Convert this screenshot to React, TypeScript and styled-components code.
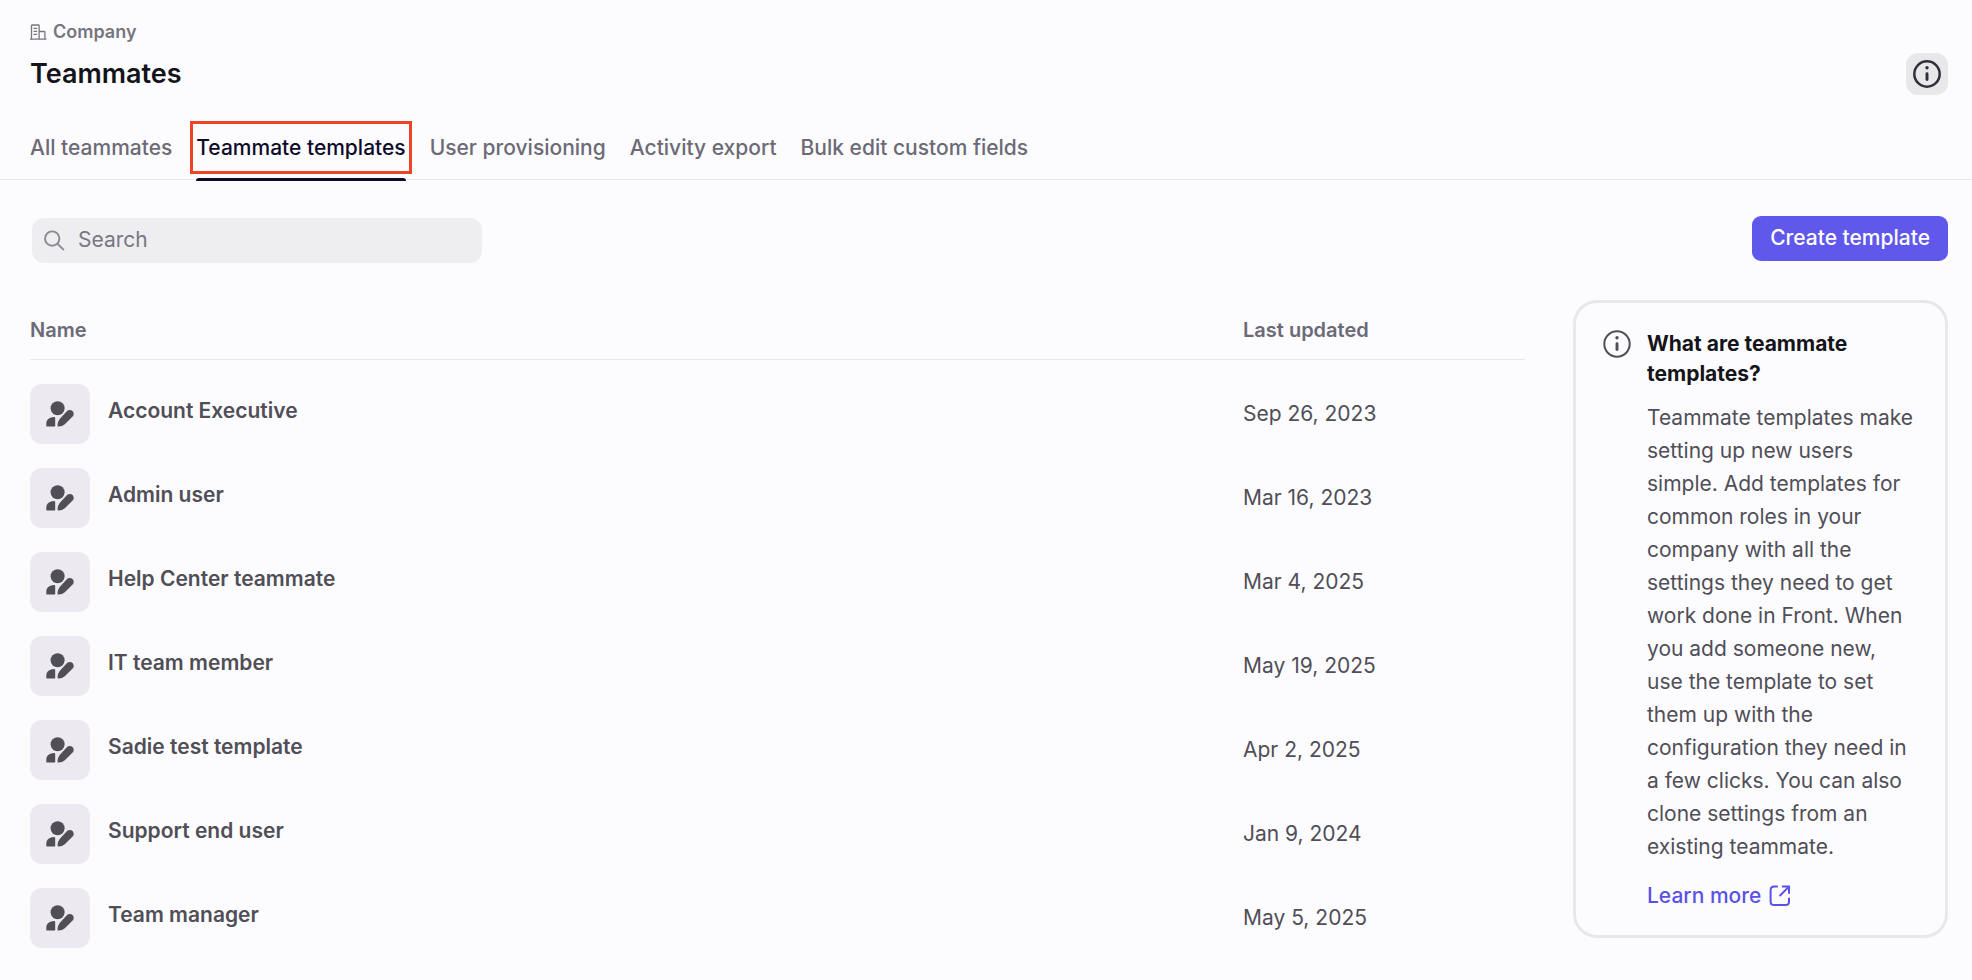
import React from "react";
import styled, { createGlobalStyle } from "styled-components";

const GlobalStyle = createGlobalStyle`
  *, *::before, *::after { box-sizing: border-box; }
  body {
    margin: 0;
    background: #fcfcfe;
    color: #504e57;
    font-family: Inter, "Liberation Sans", sans-serif;
    font-size: 21px;
    line-height: 30px;
  }
  button, input { font: inherit; }
`;

const Page = styled.div`
  padding-bottom: 24px;
`;

const Header = styled.header`
  display: flex;
  align-items: flex-end;
  justify-content: space-between;
  padding: 20px 24px 0 30px;
`;

const Breadcrumb = styled.a`
  display: flex;
  align-items: center;
  gap: 6px;
  color: #76757f;
  font-size: 18px;
  line-height: 24px;
  font-weight: 600;
  text-decoration: none;
`;

const Title = styled.h1`
  margin: 9px 0 0;
  color: #15141a;
  font-size: 27px;
  line-height: 42px;
  font-weight: 600;
`;

const InfoButton = styled.button`
  display: flex;
  align-items: center;
  justify-content: center;
  width: 42px;
  height: 42px;
  padding: 0;
  border: 0;
  border-radius: 12px;
  background: #e8e8ea;
  color: #322f3d;
  cursor: pointer;
`;

const Tabs = styled.div`
  display: flex;
  gap: 24px;
  padding: 24px 24px 0 30px;
  border-bottom: 1px solid #e8e8eb;
`;

const Tab = styled.button<{ $active?: boolean }>`
  position: relative;
  height: 60px;
  padding: 0 0 2px;
  border: 0;
  background: none;
  color: ${(p) => (p.$active ? "#0e0a2a" : "#6b6a75")};
  font-weight: 500;
  white-space: nowrap;
  cursor: pointer;

  &::after {
    content: ${(p) => (p.$active ? '""' : "none")};
    position: absolute;
    left: 0;
    right: 0;
    bottom: -2px;
    height: 3px;
    border-radius: 3px 3px 0 0;
    background: #0e0a2a;
  }
`;

const Highlight = styled.span`
  position: absolute;
  inset: 2px -6px 5px;
  border: 3px solid #ee4426;
  pointer-events: none;
`;

const Toolbar = styled.div`
  display: flex;
  justify-content: space-between;
  align-items: flex-start;
  padding: 36px 24px 0 32px;
`;

const SearchBox = styled.label`
  display: flex;
  align-items: center;
  gap: 13px;
  width: 450px;
  height: 45px;
  margin-top: 2px;
  padding: 0 12px;
  border-radius: 12px;
  background: #eeeef0;
  color: #8c8b94;
`;

const SearchInput = styled.input`
  flex: 1;
  min-width: 0;
  padding: 0 0 2px;
  border: 0;
  outline: 0;
  background: none;
  color: #504e57;
  &::placeholder { color: #787782; opacity: 1; }
`;

const PrimaryButton = styled.button`
  height: 45px;
  padding: 0 18px 2px;
  border: 0;
  border-radius: 9px;
  background: #6058eb;
  color: #fff;
  font-weight: 500;
  cursor: pointer;
`;

const Content = styled.main`
  display: flex;
  align-items: flex-start;
  gap: 48px;
  padding: 37px 24px 0 30px;
`;

const Table = styled.table`
  flex: 1;
  border-collapse: separate;
  border-spacing: 0;
  table-layout: fixed;
`;

const HeadCell = styled.th<{ $width?: string }>`
  width: ${(p) => p.$width || "auto"};
  height: 60px;
  padding: 0;
  border-bottom: 1px solid #e8e8eb;
  color: #6b6a75;
  font-size: 20px;
  font-weight: 600;
  text-align: left;
`;

const Cell = styled.td`
  padding: 24px 0 0;
  vertical-align: middle;
`;

const NameGroup = styled.div`
  display: flex;
  align-items: center;
  gap: 18px;
`;

const Tile = styled.span`
  display: flex;
  align-items: center;
  justify-content: center;
  width: 60px;
  height: 60px;
  border-radius: 12px;
  background: #ece9f0;
  color: #504e57;
`;

const Name = styled.span`
  padding-bottom: 6px;
  font-weight: 600;
`;

const Card = styled.aside`
  display: flex;
  gap: 16px;
  width: 375px;
  flex: none;
  padding: 26px 30px 24px 27px;
  border: 3px solid #e8e8ea;
  border-radius: 24px;
`;

const CardIcon = styled.span`
  display: flex;
  flex: none;
  height: 30px;
  align-items: center;
`;

const CardTitle = styled.h2`
  margin: 0 0 12px;
  color: #15141a;
  font-size: 21px;
  line-height: 30px;
  font-weight: 700;
`;

const CardText = styled.p`
  margin: 0 0 18px;
  line-height: 33px;
`;

const CardLink = styled.a`
  display: flex;
  width: fit-content;
  align-items: center;
  gap: 8px;
  color: #5a51e6;
  font-weight: 500;
  text-decoration: none;
`;

const CompanyIcon = () => (
  <svg width="17" height="16" viewBox="0 0 17 16" fill="none" stroke="currentColor" strokeWidth="1.3" aria-hidden="true">
    <path d="M1.5 15V1.8q0-.8.8-.8h6q.8 0 .8.8V15M9.1 7.5h5q.8 0 .8.8V15M0 15.2h16.5" />
    <path d="M3.5 4.4h3.6M3.5 7.4h3.6M3.5 10.4h3.6" />
  </svg>
);

const InfoIcon = ({ stroke = 2 }: { stroke?: number }) => (
  <svg width="28" height="28" viewBox="0 0 28 28" fill="none" aria-hidden="true">
    <circle cx="14" cy="14" r="12.7" stroke="currentColor" strokeWidth={stroke} />
    <circle cx="14" cy="7.8" r="1.7" fill="currentColor" />
    <path d="M14 13.8v5.8" stroke="currentColor" strokeWidth="2.9" strokeLinecap="round" />
  </svg>
);

const SearchIcon = () => (
  <svg width="21" height="21" viewBox="0 0 21 21" fill="none" stroke="currentColor" strokeWidth="1.9" strokeLinecap="round" aria-hidden="true">
    <circle cx="8.2" cy="8.6" r="7.2" />
    <path d="m13.4 13.8 6 5.8" />
  </svg>
);

const TemplateIcon = () => (
  <svg width="28" height="26" viewBox="0 0 28 26" fill="currentColor" aria-hidden="true">
    <circle cx="11.6" cy="7.2" r="7" />
    <path d="M9.2 17.2v7.2q0 1.2-1.2 1.2H1.5Q.3 25.6.3 24.4v-1.6Q.3 17.8 5 16.4q1.4-.4 3-.4 1.2 0 1.2 1.2Z" />
    <path d="M20.8 10.2q1.4-1.2 2.8-1.200 3.900.2 4.100 4 0 1.500-1.100 2.600l-7.800 7.600q-2.400 2.300-6.200 2.300-1.200 0-1.100-1.200.2-3.700 2.200-6.200Z" />
  </svg>
);

const ExternalIcon = () => (
  <svg width="22" height="22" viewBox="0 0 22 22" fill="none" stroke="currentColor" strokeWidth="2" aria-hidden="true">
    <path d="M8.8 1.6H5.2Q1.6 1.6 1.6 5.2v11.2q0 3.600 3.600 3.600h11.200q3.600 0 3.600-3.600v-3.700" />
    <path d="M12.9 1.6H20v7.2M19.7 1.9 10.6 11" />
  </svg>
);

const tabs = ["All teammates", "Teammate templates", "User provisioning", "Activity export", "Bulk edit custom fields"];
const activeTab = "Teammate templates";

const templates = [
  { name: "Account Executive", updated: "Sep 26, 2023" },
  { name: "Admin user", updated: "Mar 16, 2023" },
  { name: "Help Center teammate", updated: "Mar 4, 2025" },
  { name: "IT team member", updated: "May 19, 2025" },
  { name: "Sadie test template", updated: "Apr 2, 2025" },
  { name: "Support end user", updated: "Jan 9, 2024" },
  { name: "Team manager", updated: "May 5, 2025" },
];

export default function App() {
  return (
    <Page>
      <GlobalStyle />
      <Header>
        <div>
          <Breadcrumb href="#company"><CompanyIcon />Company</Breadcrumb>
          <Title>Teammates</Title>
        </div>
        <InfoButton type="button" aria-label="About teammates"><InfoIcon stroke={2.5} /></InfoButton>
      </Header>
      <Tabs role="tablist">
        {tabs.map((tab) => (
          <Tab key={tab} type="button" role="tab" aria-selected={tab === activeTab} $active={tab === activeTab}>
            {tab}
            {tab === activeTab && <Highlight />}
          </Tab>
        ))}
      </Tabs>
      <Toolbar>
        <SearchBox>
          <SearchIcon />
          <SearchInput type="search" placeholder="Search" aria-label="Search templates" />
        </SearchBox>
        <PrimaryButton type="button">Create template</PrimaryButton>
      </Toolbar>
      <Content>
        <Table>
          <thead>
            <tr>
              <HeadCell scope="col">Name</HeadCell>
              <HeadCell scope="col" $width="282px">Last updated</HeadCell>
            </tr>
          </thead>
          <tbody>
            {templates.map((template) => (
              <tr key={template.name}>
                <Cell>
                  <NameGroup>
                    <Tile><TemplateIcon /></Tile>
                    <Name>{template.name}</Name>
                  </NameGroup>
                </Cell>
                <Cell>{template.updated}</Cell>
              </tr>
            ))}
          </tbody>
        </Table>
        <Card>
          <CardIcon><InfoIcon /></CardIcon>
          <div>
            <CardTitle>What are teammate templates?</CardTitle>
            <CardText>
              Teammate templates make setting up new users simple. Add templates for common roles in your company with
              all the settings they need to get work done in Front. When you add someone new, use the template to set
              them up with the configuration they need in a few clicks. You can also clone settings from an existing
              teammate.
            </CardText>
            <CardLink href="#learn-more">Learn more<ExternalIcon /></CardLink>
          </div>
        </Card>
      </Content>
    </Page>
  );
}
